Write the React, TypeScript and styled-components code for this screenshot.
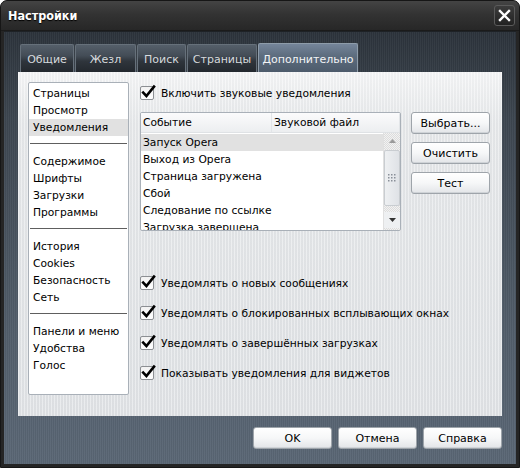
import React from 'react'
import styled, { createGlobalStyle } from 'styled-components'

const GlobalStyle = createGlobalStyle`
  html, body {
    margin: 0;
    padding: 0;
    background: #ffffff;
  }
  body {
    font-family: "DejaVu Sans", "Noto Sans", sans-serif;
    font-size: 10.7px;
  }
`

const Window = styled.div`
  width: 520px;
  height: 468px;
  box-sizing: border-box;
  display: flex;
  flex-direction: column;
  background: #252525;
  border: 1px solid #161616;
  border-radius: 7px 7px 0 0;
  overflow: hidden;
`

const TitleBar = styled.div`
  height: 29px;
  flex: none;
  display: flex;
  align-items: center;
  justify-content: space-between;
  padding: 0 4px 0 7px;
  background: linear-gradient(#444 0%, #333 45%, #272727 100%);
  border-bottom: 1px solid #1b1b1b;
`

const Title = styled.div`
  color: #ffffff;
  font-family: "DejaVu Sans Condensed", "DejaVu Sans", sans-serif;
  font-weight: bold;
  font-size: 12.5px;
  text-shadow: 0 1px 1px #000;
`

const CloseButton = styled.div`
  width: 21px;
  height: 21px;
  box-sizing: border-box;
  border: 1px solid #5a5a5a;
  border-radius: 3px;
  background: linear-gradient(#3c3c3c, #222);
  display: flex;
  align-items: center;
  justify-content: center;
`

const Body = styled.div`
  flex: 1;
  margin: 0 3px 3px;
  display: flex;
  flex-direction: column;
  background:
    repeating-linear-gradient(90deg, rgba(255,255,255,0.035) 0 1px, rgba(0,0,0,0.04) 1px 2px),
    linear-gradient(#2c333b 0%, #3d4650 20%, #525e6b 70%, #5a6775 100%);
  border-top: 1px solid #1e2226;
`

const TabRow = styled.div`
  display: flex;
  align-items: flex-end;
  padding: 12px 0 0 16px;
  height: 28px;
`

const Tab = styled.div<{ $active?: boolean; $w: number }>`
  width: ${p => p.$w}px;
  height: ${p => (p.$active ? 29 : 28)}px;
  box-sizing: border-box;
  margin-right: 1px;
  display: flex;
  align-items: center;
  justify-content: center;
  padding-top: ${p => (p.$active ? 3 : 1)}px;
  color: ${p => (p.$active ? '#f2f4f6' : '#d6dadd')};
  font-size: 11px;
  border: 1px solid ${p => (p.$active ? '#8e9caa' : '#66707a')};
  border-bottom: none;
  border-radius: 2px 2px 0 0;
  background: ${p =>
    p.$active
      ? 'linear-gradient(#75859a 0%, #5e6e80 40%, #4d5b6b 100%)'
      : 'linear-gradient(#555f6a 0%, #434c56 40%, #2f353c 60%, #23282e 100%)'};
`

const Panel = styled.div`
  height: 344px;
  margin: 0 14px;
  box-sizing: border-box;
  padding: 10px 10px 0;
  display: grid;
  grid-template-columns: 101px 1fr;
  column-gap: 11px;
  background:
    repeating-linear-gradient(90deg, rgba(255,255,255,0.35) 0 1px, rgba(0,0,0,0.015) 1px 3px),
    linear-gradient(#f4f5f6 0%, #e6e8ea 15%, #dfe2e5 100%);
`

const SideList = styled.div`
  height: 313px;
  box-sizing: border-box;
  background: #fff;
  border: 1px solid #a9b0b8;
  border-radius: 2px;
  padding-top: 2px;
`

const SideItem = styled.div<{ $selected?: boolean }>`
  height: 17px;
  line-height: 17px;
  padding-left: 4px;
  color: #000;
  white-space: nowrap;
  background: ${p => (p.$selected ? '#e1e1e1' : 'transparent')};
`

const SideSep = styled.div`
  height: 1px;
  background: #5e5e5e;
  margin: 7px 1px 9px;
`

const Main = styled.div`
  display: flex;
  flex-direction: column;
`

const CheckRow = styled.div<{ $mt?: number }>`
  display: flex;
  align-items: center;
  height: 18px;
  margin-top: ${p => p.$mt ?? 0}px;
  color: #000;
`

const Box = styled.div`
  width: 14px;
  height: 14px;
  box-sizing: border-box;
  border: 1px solid #8c8f93;
  border-radius: 2px;
  background: linear-gradient(#f2f2f2, #fff);
  position: relative;
  margin-right: 7px;
  flex: none;
`

const Tick = styled.svg`
  position: absolute;
  left: 0px;
  top: -3px;
`

const TableRow = styled.div`
  display: flex;
  margin-top: 10px;
`

const Table = styled.div`
  width: 261px;
  height: 119px;
  box-sizing: border-box;
  border: 1px solid #a9b0b8;
  border-radius: 2px;
  background: #fff;
  display: flex;
  flex-direction: column;
  overflow: hidden;
`

const Header = styled.div`
  height: 19px;
  flex: none;
  display: flex;
  background: linear-gradient(#fbfbfc, #eceef0);
  border-bottom: 1px solid #dfe2e5;
`

const HeadCell = styled.div<{ $w?: number }>`
  width: ${p => (p.$w ? `${p.$w}px` : 'auto')};
  flex: ${p => (p.$w ? 'none' : 1)};
  box-sizing: border-box;
  padding-left: 2px;
  line-height: 19px;
  border-right: 1px solid #e2e5e8;
  color: #000;
`

const TableBody = styled.div`
  flex: 1;
  display: flex;
  overflow: hidden;
`

const Rows = styled.div`
  flex: 1;
  padding-top: 1px;
`

const Row = styled.div<{ $selected?: boolean }>`
  height: 17px;
  line-height: 17px;
  padding-left: 2px;
  color: #000;
  white-space: nowrap;
  background: ${p => (p.$selected ? '#e1e1e1' : 'transparent')};
`

const Scroll = styled.div`
  width: 16px;
  flex: none;
  display: flex;
  flex-direction: column;
  background-color: #e9e9e9;
  background-image: repeating-conic-gradient(#dcdcdc 0 25%, #f2f2f2 0 50%);
  background-size: 2px 2px;
  border-left: 1px solid #e0e0e0;
`

const ScrollBtn = styled.div<{ $solid?: boolean }>`
  height: 16px;
  flex: none;
  display: flex;
  align-items: center;
  justify-content: center;
  background: ${p => (p.$solid ? '#eef0f2' : 'transparent')};
`

const Thumb = styled.div`
  height: 56px;
  margin: 1px 0 6px;
  box-sizing: border-box;
  border: 1px solid #c9cdd1;
  border-radius: 2px;
  background: linear-gradient(90deg, #eef0f2, #dfe2e6);
  display: flex;
  align-items: center;
  justify-content: center;
`

const SideButtons = styled.div`
  display: flex;
  flex-direction: column;
  gap: 8px;
  margin-left: 10px;
`

const Button = styled.div<{ $w?: number }>`
  width: ${p => p.$w ?? 79}px;
  height: 22px;
  box-sizing: border-box;
  border: 1px solid #9ea4aa;
  border-radius: 3px;
  background: linear-gradient(#ffffff 0%, #f6f7f8 50%, #e3e5e8 100%);
  box-shadow: inset 0 -1px 0 #cfd3d7;
  display: flex;
  align-items: center;
  justify-content: center;
  color: #000;
  font-size: 11px;
`

const Footer = styled.div`
  flex: 1;
  display: flex;
  justify-content: flex-end;
  align-items: flex-start;
  gap: 6px;
  padding: 11px 14px 0 0;
`

const Check: React.FC = () => (
  <Box>
    <Tick width="16" height="16" viewBox="0 0 16 16">
      <path d="M2.2 8.6 L5.4 12 L13 2.6" fill="none" stroke="#000" strokeWidth="2.6" strokeLinecap="square" strokeLinejoin="miter" />
    </Tick>
  </Box>
)

const CheckOption: React.FC<{ label: string; mt?: number }> = ({ label, mt }) => (
  <CheckRow $mt={mt}>
    <Check />
    {label}
  </CheckRow>
)

const tabs = [
  { label: 'Общие', w: 54 },
  { label: 'Жезл', w: 61 },
  { label: 'Поиск', w: 49 },
  { label: 'Страницы', w: 70 },
  { label: 'Дополнительно', w: 100, active: true },
]

const sideGroups = [
  ['Страницы', 'Просмотр', 'Уведомления'],
  ['Содержимое', 'Шрифты', 'Загрузки', 'Программы'],
  ['История', 'Cookies', 'Безопасность', 'Сеть'],
  ['Панели и меню', 'Удобства', 'Голос'],
]

const events = [
  'Запуск Opera',
  'Выход из Opera',
  'Страница загружена',
  'Сбой',
  'Следование по ссылке',
  'Загрузка завершена',
]

const options = [
  'Уведомлять о новых сообщениях',
  'Уведомлять о блокированных всплывающих окнах',
  'Уведомлять о завершённых загрузках',
  'Показывать уведомления для виджетов',
]

export default function App() {
  return (
    <>
      <GlobalStyle />
      <Window>
        <TitleBar>
          <Title>Настройки</Title>
          <CloseButton>
            <svg width="13" height="13" viewBox="0 0 13 13">
              <path d="M2 2 L11 11 M11 2 L2 11" stroke="#fff" strokeWidth="2.4" strokeLinecap="square" />
            </svg>
          </CloseButton>
        </TitleBar>
        <Body>
          <TabRow>
            {tabs.map(t => (
              <Tab key={t.label} $w={t.w} $active={t.active}>
                {t.label}
              </Tab>
            ))}
          </TabRow>
          <Panel>
            <SideList>
              {sideGroups.map((g, gi) => (
                <React.Fragment key={gi}>
                  {gi > 0 && <SideSep />}
                  {g.map(item => (
                    <SideItem key={item} $selected={item === 'Уведомления'}>
                      {item}
                    </SideItem>
                  ))}
                </React.Fragment>
              ))}
            </SideList>
            <Main>
              <CheckOption label="Включить звуковые уведомления" mt={2} />
              <TableRow>
                <Table>
                  <Header>
                    <HeadCell $w={131}>Событие</HeadCell>
                    <HeadCell>Звуковой файл</HeadCell>
                  </Header>
                  <TableBody>
                    <Rows>
                      {events.map((e, i) => (
                        <Row key={e} $selected={i === 0}>
                          {e}
                        </Row>
                      ))}
                    </Rows>
                    <Scroll>
                      <ScrollBtn>
                        <svg width="7" height="4" viewBox="0 0 7 4">
                          <path d="M0 4 L3.5 0 L7 4 Z" fill="#9a9a9a" />
                        </svg>
                      </ScrollBtn>
                      <Thumb>
                        <svg width="8" height="8" viewBox="0 0 8 8">
                          {[0, 3, 6].map(y =>
                            [0, 3, 6].map(x => <rect key={`${x}-${y}`} x={x} y={y} width="1.5" height="1.5" fill="#8a9099" />)
                          )}
                        </svg>
                      </Thumb>
                      <ScrollBtn $solid>
                        <svg width="7" height="4" viewBox="0 0 7 4">
                          <path d="M0 0 L7 0 L3.5 4 Z" fill="#333" />
                        </svg>
                      </ScrollBtn>
                    </Scroll>
                  </TableBody>
                </Table>
                <SideButtons>
                  <Button>Выбрать...</Button>
                  <Button>Очистить</Button>
                  <Button>Тест</Button>
                </SideButtons>
              </TableRow>
              <CheckOption label={options[0]} mt={43} />
              {options.slice(1).map(o => (
                <CheckOption key={o} label={o} mt={12} />
              ))}
            </Main>
          </Panel>
          <Footer>
            <Button>OK</Button>
            <Button>Отмена</Button>
            <Button>Справка</Button>
          </Footer>
        </Body>
      </Window>
    </>
  )
}
